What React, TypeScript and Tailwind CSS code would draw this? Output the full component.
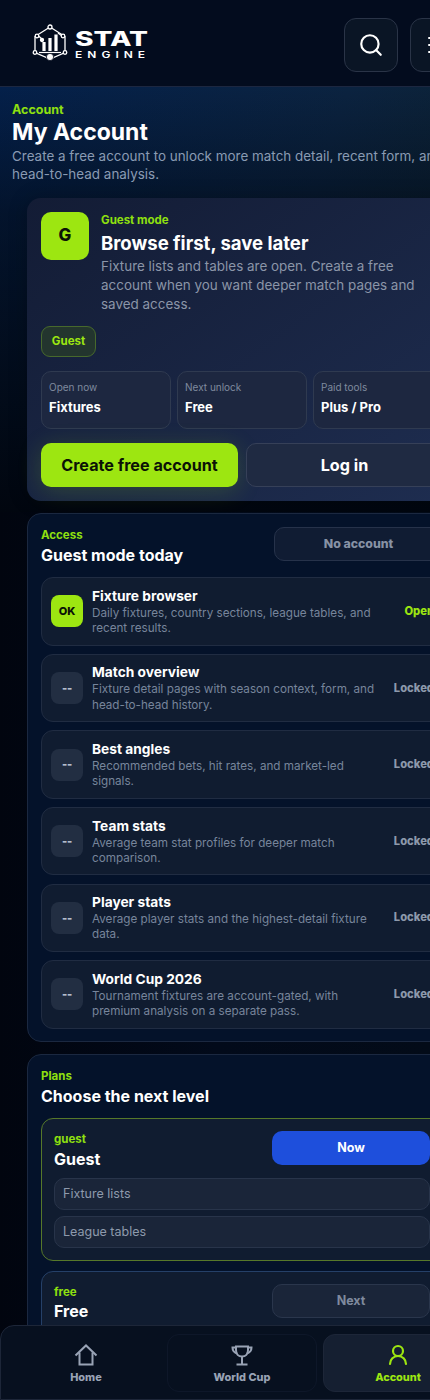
import React from "react";
import { Search, Menu, UserRound } from "lucide-react";

const font = { fontFamily: "Inter, 'Noto Sans', sans-serif" };

const Logo = () => (
  <div className="flex items-center gap-[7px]">
    <svg width="36" height="38" viewBox="0 0 36 38" fill="none" stroke="#fff" strokeWidth="1.3">
      <path d="M18 3 L33 12.5 L33 28.5 L18 35 L3 28.5 L3 12.5 Z" />
      <path d="M6 11.5 L10 15 M30 12 L26 9" />
      <circle cx="18" cy="3" r="2" fill="#050d1e" />
      <circle cx="5" cy="12" r="1.8" fill="#050d1e" />
      <circle cx="31" cy="12" r="1.8" fill="#050d1e" />
      <circle cx="3" cy="28.5" r="1.8" fill="#050d1e" />
      <circle cx="33" cy="28.5" r="1.8" fill="#050d1e" />
      <circle cx="10" cy="16" r="1.5" fill="#fff" />
      <path d="M12 18v9M18 14v13M24 10.5v16.5" strokeWidth="3.2" />
      <path d="M7 28.5h22" strokeWidth="1.2" />
      <circle cx="18" cy="33" r="3.6" fill="#fff" stroke="#050d1e" strokeWidth="0.8" />
    </svg>
    <div className="flex flex-col pt-[2px] text-white">
      <span className="origin-left scale-x-[1.4] text-[20px] leading-[20px] font-extrabold">STAT</span>
      <span className="mt-[1px] origin-left scale-x-[1.33] text-[9px] leading-[10px] font-semibold tracking-[0.42em]">ENGINE</span>
    </div>
  </div>
);

const HomeIcon = () => (
  <svg width="24" height="24" viewBox="0 0 24 24" fill="none" stroke="currentColor" strokeWidth="2">
    <path d="M1.5 12.5 L12 2.5 L22.5 12.5" />
    <path d="M5.5 9.5V21.5H18.5V9.5" />
  </svg>
);

const CupIcon = () => (
  <svg width="24" height="24" viewBox="0 0 24 24" fill="none" stroke="currentColor" strokeWidth="2">
    <path d="M6 3.5h12v3.5c0 4-2.5 6.5-6 6.5s-6-2.5-6-6.5z" />
    <path d="M6 4.5H2.5c0 3 1.5 5 4.5 6M18 4.5h3.5c0 3-1.5 5-4.5 6" />
    <path d="M12 14v7M6.5 21.5h11" />
  </svg>
);

const Stat = ({ label, value }: { label: string; value: string }) => (
  <div className="h-[58px] rounded-[10px] border border-[#2f3a50] bg-[#1d2740] px-[7px] pt-[8px]">
    <div className="text-[10px] leading-[14px] text-[#7f8a9e]">{label}</div>
    <div className="mt-[4px] text-[13px] leading-[18px] font-bold text-white">{value}</div>
  </div>
);

const features = [
  { title: "Fixture browser", text: "Daily fixtures, country sections, league tables, and recent results.", on: true },
  { title: "Match overview", text: "Fixture detail pages with season context, form, and head-to-head history." },
  { title: "Best angles", text: "Recommended bets, hit rates, and market-led signals." },
  { title: "Team stats", text: "Average team stat profiles for deeper match comparison." },
  { title: "Player stats", text: "Average player stats and the highest-detail fixture data." },
  { title: "World Cup 2026", text: "Tournament fixtures are account-gated, with premium analysis on a separate pass." },
];

const FeatureRow = ({ title, text, on }: { title: string; text: string; on?: boolean }) => (
  <div className="flex h-[68.4px] items-center rounded-[12px] border border-[#202c42] bg-[#101c30] pl-[9px] pr-[8px]">
    <div
      className={
        on
          ? "flex h-[32px] w-[32px] shrink-0 items-center justify-center rounded-[8px] bg-[#9de611] text-[11px] font-extrabold text-[#0b1206]"
          : "flex h-[32px] w-[32px] shrink-0 items-center justify-center rounded-[8px] bg-[#222e42] text-[11px] font-black tracking-tight text-[#b4bdcb]"
      }
    >
      {on ? "OK" : "--"}
    </div>
    <div className="ml-[9px] w-[292px] shrink-0">
      <div className="text-[13.76px] leading-[18px] font-bold text-white">{title}</div>
      <div className="mt-[1px] text-[11.68px] leading-[15.2px] text-[#77859b]">{text}</div>
    </div>
    <div className={on ? "ml-auto text-[11.2px] font-extrabold text-[#9de611]" : "ml-auto text-[11.2px] font-extrabold text-[#8d99ab]"}>
      {on ? "Open" : "Locked"}
    </div>
  </div>
);

const PlanPill = ({ text }: { text: string }) => (
  <div className="flex h-[32px] items-center rounded-[10px] border border-[#28344a] bg-[#1a2539] px-[8px] text-[12.5px] text-[#8e9aac]">{text}</div>
);

const NavItem = ({ icon, label, active, boxed }: { icon: React.ReactNode; label: string; active?: boolean; boxed?: boolean }) => (
  <div
    className={
      active
        ? "flex h-[58px] w-[150px] flex-col items-center rounded-[12px] border border-[#1d2638] bg-[#151f31] pt-[8px] text-[#9de611]"
        : boxed
          ? "flex h-[58px] w-[150px] flex-col items-center rounded-[12px] border border-[#0e1729] pt-[8px] text-[#99a3b5]"
          : "flex h-[58px] w-[150px] flex-col items-center border border-transparent pt-[8px] text-[#99a3b5]"
    }
  >
    {icon}
    <span className="mt-[3px] text-[10.9px] leading-[14px] font-extrabold">{label}</span>
  </div>
);

export default function App() {
  return (
    <div style={font} className="relative h-[1400px] w-[430px] overflow-hidden bg-gradient-to-r from-[#01050f] via-[#020a1a] to-[#030b18]">
      <header className="flex h-[87px] w-[476px] items-center justify-between border-b border-[#1c2740] bg-[#030c1e] pl-[32px] pr-[12px]">
        <Logo />
        <div className="mt-[3px] flex gap-[12px]">
          <div className="flex h-[54px] w-[54px] shrink-0 items-center justify-center rounded-[12px] border border-[#2a3447] bg-[#0a1525] text-white">
            <Search size={26} strokeWidth={2} />
          </div>
          <div className="flex h-[54px] w-[54px] shrink-0 items-center justify-center rounded-[12px] border border-[#2a3447] bg-[#0a1525] text-white">
            <Menu size={24} strokeWidth={2} />
          </div>
        </div>
      </header>

      <section className="h-[425px] w-[430px] bg-[linear-gradient(180deg,rgba(1,6,15,0)_0%,rgba(1,6,15,0.5)_30%,#01060f_100%),linear-gradient(110deg,#04204a,#0b2340_60%,#0d2230)] pl-[12px] pt-[15px]">
        <div className="text-[12.5px] leading-[16px] font-bold text-[#8fe00f]">Account</div>
        <h1 className="text-[23px] leading-[29px] font-bold text-white">My Account</h1>
        <p className="w-[450px] text-[13.44px] leading-[18px] text-[#8a9bb3]">
          Create a free account to unlock more match detail, recent form, and head-to-head analysis.
        </p>

        <div className="mt-[15px] ml-[15px] h-[303px] w-[430px] rounded-[14px] bg-gradient-to-br from-[#131c35] to-[#1e2d50] p-[14px] shadow-[0_0_20px_rgba(0,0,0,0.2)]">
          <div className="flex gap-[12px]">
            <div className="flex h-[48px] w-[48px] shrink-0 items-center justify-center rounded-[10px] bg-[#9de611] text-[17px] font-extrabold text-[#0b1206]">G</div>
            <div>
              <div className="text-[11.5px] leading-[16px] font-bold text-[#8fe00f]">Guest mode</div>
              <h2 className="mt-[2px] text-[18.56px] leading-[26px] font-bold text-white">Browse first, save later</h2>
              <p className="mt-[1px] w-[330px] text-[13.44px] leading-[19px] text-[#8b95a8]">
                Fixture lists and tables are open. Create a free account when you want deeper match pages and saved access.
              </p>
            </div>
          </div>
          <div className="mt-[12px] flex h-[31px] w-[55px] items-center justify-center rounded-[9px] border border-[#47692c] bg-[#23352e] text-[11.5px] font-bold text-[#9de611]">Guest</div>
          <div className="mt-[14px] grid grid-cols-3 gap-[6px]">
            <Stat label="Open now" value="Fixtures" />
            <Stat label="Next unlock" value="Free" />
            <Stat label="Paid tools" value="Plus / Pro" />
          </div>
          <div className="mt-[14px] grid grid-cols-2 gap-[8px]">
            <div className="flex h-[44px] items-center justify-center rounded-[10px] bg-[#9de611] text-[16.16px] font-bold text-[#0b1206] shadow-[0_4px_24px_rgba(157,230,17,0.18)]">Create free account</div>
            <div className="flex h-[44px] items-center justify-center rounded-[10px] border border-[#364058] bg-[#1f2a42] text-[16.16px] font-bold text-white">Log in</div>
          </div>
        </div>
      </section>

      <section className="ml-[27px] mt-[1px] h-[529px] w-[430px] rounded-[14px] border border-[#1b2840] bg-[#04122a] p-[13px]">
        <div className="flex items-start justify-between">
          <div>
            <div className="text-[11.5px] leading-[16px] font-bold text-[#8fe00f]">Access</div>
            <h3 className="mt-[1px] text-[16px] leading-[22px] font-bold text-white">Guest mode today</h3>
          </div>
          <div className="flex h-[34px] w-[169px] items-center justify-center rounded-[10px] border border-[#26324a] bg-[#101c33] text-[12.3px] font-extrabold text-[#8792a5]">No account</div>
        </div>
        <div className="mt-[11.3px] flex flex-col gap-[8.2px]">
          {features.map((f) => (
            <FeatureRow key={f.title} {...f} />
          ))}
        </div>
      </section>

      <section className="ml-[27px] mt-[12px] h-[400px] w-[430px] rounded-[14px] border border-[#1b2840] bg-[#04122a] p-[13px]">
        <div className="text-[11.5px] leading-[16px] font-bold text-[#8fe00f]">Plans</div>
        <h3 className="mt-[1px] text-[16px] leading-[22px] font-bold text-white">Choose the next level</h3>
        <div className="mt-[11px] h-[143px] rounded-[12px] border border-[#56782a] bg-[#101c30] px-[12px] pt-[12px]">
          <div className="flex items-start justify-between">
            <div>
              <div className="text-[11.5px] leading-[16px] font-bold text-[#8fe00f]">guest</div>
              <div className="mt-[1px] text-[16px] leading-[22px] font-bold text-white">Guest</div>
            </div>
            <div className="flex h-[34px] w-[158px] items-center justify-center rounded-[10px] bg-[#1e4fdc] text-[12.5px] font-bold text-white">Now</div>
          </div>
          <div className="mt-[8px] flex flex-col gap-[6px]">
            <PlanPill text="Fixture lists" />
            <PlanPill text="League tables" />
          </div>
        </div>
        <div className="mt-[10px] h-[143px] rounded-[12px] border border-[#254068] bg-[#101c30] px-[12px] pt-[12px]">
          <div className="flex items-start justify-between">
            <div>
              <div className="text-[11.5px] leading-[16px] font-bold text-[#8fe00f]">free</div>
              <div className="text-[16px] leading-[22px] font-bold text-white">Free</div>
            </div>
            <div className="flex h-[34px] w-[158px] items-center justify-center rounded-[10px] border border-[#2a364c] bg-[#1a2539] text-[12.5px] font-bold text-[#7f8a9e]">Next</div>
          </div>
        </div>
      </section>

      <nav className="absolute bottom-0 left-0 flex h-[75px] w-[490px] items-start gap-[6px] rounded-t-[14px] border border-[#1d2638] bg-[#07101f] pl-[10px] pt-[8px]">
        <NavItem icon={<HomeIcon />} label="Home" />
        <NavItem icon={<CupIcon />} label="World Cup" boxed />
        <NavItem icon={<UserRound size={24} strokeWidth={2.2} />} label="Account" active />
      </nav>
    </div>
  );
}
